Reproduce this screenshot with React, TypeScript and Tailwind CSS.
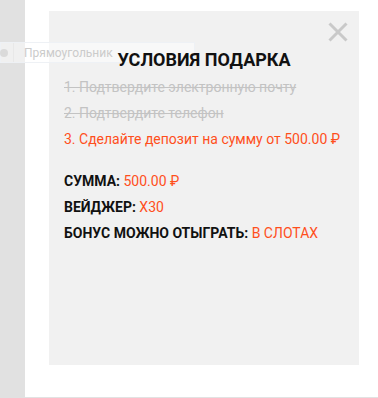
import React from "react";

export default function App() {
  const font = { fontFamily: "Roboto, 'Noto Sans', sans-serif" };
  return (
    <div className="relative w-[378px] h-[398px] bg-white flex overflow-hidden" style={font}>
      <div className="w-[25px] h-full bg-[#e1e1e1]" />
      <div className="flex-1 h-full border-b border-[#e2e2e2] pt-[11px] pl-[24px]">
        <div className="relative w-[310px] h-[354px] bg-[#f1f1f1] px-[15px] pt-[39px]">
          <button className="absolute right-[11px] top-[11px] w-[20px] h-[20px]">
            <svg width="20" height="20" viewBox="0 0 20 20">
              <path d="M1.5 1.5 L18.5 18.5 M18.5 1.5 L1.5 18.5" stroke="#c9c9c9" strokeWidth="3" />
            </svg>
          </button>
          <h2 className="relative z-20 text-center text-[18px] leading-[20px] font-bold text-[#111]">
            УСЛОВИЯ ПОДАРКА
          </h2>
          <ol className="mt-[7px] text-[14px] leading-[20px] flex flex-col gap-[6px]">
            <li className="text-[#c3c3c3] line-through">1. Подтвердите электронную почту</li>
            <li className="text-[#c3c3c3] line-through">2. Подтвердите телефон</li>
            <li className="text-[#ff4f1c]">3. Сделайте депозит на сумму от 500.00 ₽</li>
          </ol>
          <div className="mt-[22px] text-[14px] leading-[20px] flex flex-col gap-[6px]">
            <div>
              <span className="font-bold text-[#111]">СУММА: </span>
              <span className="text-[#ff4f1c]">500.00 ₽</span>
            </div>
            <div>
              <span className="font-bold text-[#111]">ВЕЙДЖЕР: </span>
              <span className="text-[#ff4f1c]">X30</span>
            </div>
            <div>
              <span className="font-bold text-[#111]">БОНУС МОЖНО ОТЫГРАТЬ: </span>
              <span className="text-[#ff4f1c]">В СЛОТАХ</span>
            </div>
          </div>
        </div>
      </div>
      <div className="absolute z-10 left-0 top-[42px] w-[195px] h-[21px] bg-white/50 border border-[#eef1f5] flex items-center">
        <div className="w-[8px] h-[8px] rounded-full bg-[#dadada] ml-[-1px]" />
        <div className="w-px h-full bg-[#e8e8e8] ml-[5px]" />
        <span className="ml-[10px] text-[12px] text-[#cbcbcb]">Прямоугольник</span>
      </div>
    </div>
  );
}
